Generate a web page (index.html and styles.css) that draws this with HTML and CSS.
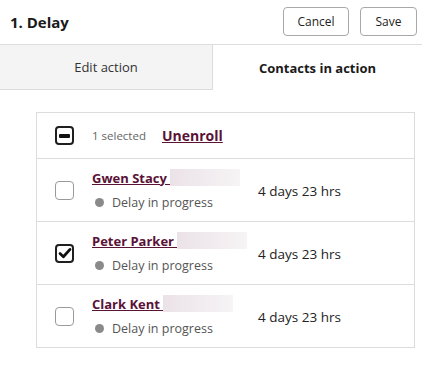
FILE: index.html
```html
<!DOCTYPE html>
<html>
<head>
<meta charset="utf-8">
<link rel="stylesheet" href="styles.css">
</head>
<body>
<header class="top">
  <h1 class="title">1. Delay</h1>
  <div class="actions">
    <button class="btn btn-cancel">Cancel</button>
    <button class="btn btn-save">Save</button>
  </div>
</header>
<nav class="tabs">
  <div class="tab tab-inactive">Edit action</div>
  <div class="tab tab-active">Contacts in action</div>
</nav>
<main class="content">
  <div class="table">
    <div class="row row-head">
      <div class="cell-check"><span class="cb cb-dark"><span class="minus"></span></span></div>
      <div class="head-text"><span class="selected">1 selected</span><a class="unenroll">Unenroll</a></div>
    </div>
    <div class="row">
      <div class="cell-check"><span class="cb"></span></div>
      <div class="info">
        <div class="name-line"><a class="name">Gwen Stacy </a><span class="blur"></span></div>
        <div class="status"><span class="dot"></span>Delay in progress</div>
      </div>
      <div class="time">4 days 23 hrs</div>
    </div>
    <div class="row">
      <div class="cell-check"><span class="cb cb-dark">
        <svg class="tick" viewBox="0 0 14 14" width="14" height="14"><path d="M2 7.6 L5.4 10.8 L12 3.4" fill="none" stroke="#111" stroke-width="2.8" stroke-linecap="round" stroke-linejoin="round"/></svg>
      </span></div>
      <div class="info">
        <div class="name-line"><a class="name">Peter Parker </a><span class="blur"></span></div>
        <div class="status"><span class="dot"></span>Delay in progress</div>
      </div>
      <div class="time">4 days 23 hrs</div>
    </div>
    <div class="row">
      <div class="cell-check"><span class="cb"></span></div>
      <div class="info">
        <div class="name-line"><a class="name">Clark Kent </a><span class="blur"></span></div>
        <div class="status"><span class="dot"></span>Delay in progress</div>
      </div>
      <div class="time">4 days 23 hrs</div>
    </div>
  </div>
</main>
</body>
</html>
```
FILE: styles.css
```css
* { box-sizing: border-box; }
body {
  margin: 0;
  font-family: "Open Sans", "DejaVu Sans", sans-serif;
  color: #222;
  background: #fff;
}
.top {
  height: 45px;
  display: flex;
  align-items: center;
  justify-content: space-between;
  padding: 0 5px 0 10px;
  border-bottom: 1px solid #dedede;
}
.title {
  margin: 0;
  font-size: 15px;
  font-weight: 700;
  color: #1a1a1a;
}
.actions {
  display: flex;
  gap: 11px;
  padding-bottom: 2px;
}
.btn {
  height: 29px;
  border: 1px solid #a8a8a8;
  border-radius: 4px;
  background: #fff;
  font-family: inherit;
  font-size: 12px;
  color: #222;
  padding: 0;
}
.btn-cancel { width: 66px; }
.btn-save { width: 57px; }
.tabs {
  display: flex;
  height: 45px;
}
.tab {
  display: flex;
  align-items: center;
  justify-content: center;
  font-size: 13px;
}
.tab-inactive {
  width: 213px;
  background: #f4f4f4;
  border-right: 1px solid #dcdcdc;
  border-bottom: 1px solid #dcdcdc;
  color: #333;
}
.tab-active {
  flex: 1;
  font-weight: 700;
  color: #1a1a1a;
}
.content {
  padding: 22px 7px 0 36px;
}
.table {
  border: 1px solid #dcdcdc;
}
.row {
  display: flex;
  align-items: center;
  height: 63px;
  border-top: 1px solid #dcdcdc;
}
.row-head {
  height: 45px;
  border-top: none;
}
.cell-check {
  width: 55px;
  padding-left: 18px;
  display: flex;
}
.cb {
  width: 19px;
  height: 19px;
  border: 1px solid #9a9a9a;
  border-radius: 4px;
  display: flex;
  align-items: center;
  justify-content: center;
  background: #fff;
}
.cb-dark {
  border: 2px solid #1f1f1f;
}
.minus {
  width: 11px;
  height: 4px;
  background: #111;
  border-radius: 1px;
}
.head-text {
  display: flex;
  align-items: center;
  gap: 16px;
}
.selected {
  font-size: 11.5px;
  color: #666;
}
.unenroll {
  font-size: 14px;
  font-weight: 700;
  color: #5a1237;
  text-decoration: underline;
}
.info {
  width: 166px;
  display: flex;
  flex-direction: column;
  gap: 8px;
}
.name-line {
  display: flex;
  align-items: center;
  height: 17px;
}
.name {
  font-size: 13px;
  font-weight: 700;
  color: #5a1237;
  text-decoration: underline;
  white-space: pre;
}
.blur {
  width: 70px;
  height: 17px;
  background: linear-gradient(90deg, #ebe2e8 0%, #f6f4f5 100%);
}
.status {
  display: flex;
  align-items: center;
  font-size: 12.5px;
  color: #555;
  padding-left: 3px;
}
.dot {
  width: 9px;
  height: 9px;
  border-radius: 50%;
  background: #8a8a8a;
  margin-right: 8px;
}
.time {
  font-size: 13.5px;
  color: #222;
  padding-top: 2px;
}
```
